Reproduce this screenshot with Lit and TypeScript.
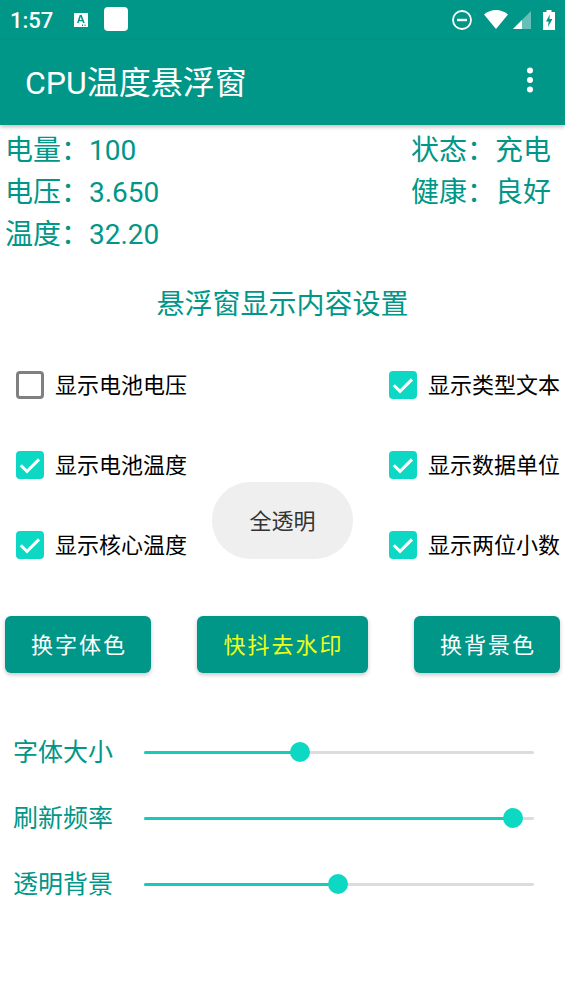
import { LitElement, html, css } from "lit";
import { customElement } from "lit/decorators.js";

const check = (label: string, on: boolean) => html`
  <div class="check">
    <span class="box ${on ? "on" : ""}">
      ${on ? html`<svg width="28" height="28" viewBox="0 0 28 28"><path d="M4.800 14.200l6.200 6.100L23 8.400" fill="none" stroke="#fff" stroke-width="3"/></svg>` : ""}
    </span>
    <span class="check-label">${label}</span>
  </div>`;

const slider = (label: string, pos: number) => html`
  <div class="slider-row">
    <span class="slider-label">${label}</span>
    <div class="track">
      <div class="fill" style="width:${pos}px"></div>
      <div class="thumb" style="left:${pos - 10}px"></div>
    </div>
  </div>`;

@customElement("app-root")
export class AppRoot extends LitElement {
  static styles = css`
    :host { display: block; width: 565px; height: 1004px; background: #fff; overflow: hidden;
      font-family: Roboto, "Noto Sans CJK SC", sans-serif; }
    .status { height: 40px; background: #009688; color: #fff; display: flex; align-items: center; padding: 0 10px 0 10px; box-sizing: border-box; font-size: 22px; font-weight: 500; }
    .status svg { display: block; }
    .time { width: 64px; }
    .white-square { width: 24px; height: 24px; border-radius: 4px; background: #fff; margin-left: 15px; margin-top: -2px; }
    .spacer { flex: 1; }
    .appbar { height: 85px; background: #009688; color: #fff; display: flex; align-items: center; justify-content: space-between; padding: 0 30px 6px 25px; box-sizing: border-box; font-size: 32px; box-shadow: 0 2px 4px rgba(0,0,0,.25); position: relative; }
    .info { display: flex; justify-content: space-between; color: #009688; font-size: 28px; line-height: 42px; padding: 5px 14px 0 5px; }
    .title { color: #009688; font-size: 28px; text-align: center; line-height: 40px; margin-top: 29px; }
    .grid { display: grid; grid-template-columns: 1fr auto 1fr; grid-template-rows: repeat(3, 80px); margin-top: 20px; padding: 0 5px 0 16px; }
    .check { display: flex; align-items: center; gap: 11px; font-size: 22px; color: #000; }
    .check-label { padding-bottom: 4px; }
    .right { justify-self: end; align-self: center; }
    .box { width: 28px; height: 28px; box-sizing: border-box; border: 3px solid #808080; border-radius: 4px; display: block; }
    .box.on { border: 0; background: #0dd8c4; }
    .box svg { display: block; }
    .pill { grid-column: 2; grid-row: 2 / span 2; align-self: end; margin: 0 28px 26px 17px; width: 141px; height: 77px; box-sizing: border-box; padding-bottom: 4px; border-radius: 38px; background: #efefef; display: flex; align-items: center; justify-content: center; font-size: 22px; color: #333; }
    .btns { display: flex; justify-content: space-between; padding: 0 5px; margin-top: 31px; }
    .btn { height: 57px; box-sizing: border-box; padding: 0 0 4px 2px; border-radius: 6px; background: #009688; color: #fff; font-size: 22px; letter-spacing: 2px; display: flex; align-items: center; justify-content: center; box-shadow: 0 2px 4px rgba(0,0,0,.22); }
    .b1 { width: 146px; }
    .b2 { width: 171px; color: #eeff1a; }
    .sliders { margin-top: 46px; padding: 0 31px 0 13px; }
    .slider-row { display: flex; align-items: center; height: 66px; }
    .slider-label { width: 131px; color: #009688; font-size: 25px; padding-bottom: 4px; }
    .track { position: relative; flex: 1; height: 3px; background: #dcdcdc; border-radius: 2px; }
    .fill { position: absolute; left: 0; top: 0; height: 3px; background: #14cdb9; border-radius: 2px; }
    .thumb { position: absolute; top: -8.500px; width: 20px; height: 20px; border-radius: 50%; background: #0dd8c4; }
  `;

  render() {
    return html`
      <div class="status">
        <span class="time">1:57</span>
        <svg width="15" height="20" viewBox="0 0 15 20"><path fill="#fff" d="M0 3h14v14H0z"/><path fill="#009688" d="M5.700 5h2l3 8H9l-.6-1.800H5.200L4.600 13H3zM6.700 6.800L5.700 10h2.100zM8 14.500h1V16H8zM10.500 14.500h1V16h-1z"/></svg>
        <div class="white-square"></div>
        <div class="spacer"></div>
        <svg width="20" height="20" viewBox="0 0 20 20" style="margin-right:12px"><circle cx="10" cy="10" r="9" fill="none" stroke="#fff" stroke-width="1.800"/><path fill="#fff" d="M5 8.800h10v2.400H5z"/></svg>
        <svg width="24" height="20" viewBox="0 0 24 20" style="margin-right:5px"><path fill="#fff" d="M0 4.500C3.300 1.600 7.500 0 12 0s8.700 1.600 12 4.500L12 19z"/></svg>
        <svg width="18" height="20" viewBox="0 0 18 20" style="margin-right:12px"><path fill="#fff" fill-opacity=".4" d="M18 1v18H0z"/><path fill="#fff" d="M0 19l9-9v9z"/></svg>
        <svg width="12" height="20" viewBox="0 0 12 20"><path fill="#fff" d="M3.500 0h5v2H12v18H0V2h3.500z"/><path fill="#009688" d="M6.800 4.500L3 11.500h2.600L5 17l4.400-8H6.400z"/></svg>
      </div>
      <div class="appbar">
        <span>CPU温度悬浮窗</span>
        <svg width="10" height="28" viewBox="0 0 10 28"><circle cx="5" cy="4.500" r="3" fill="#fff"/><circle cx="5" cy="14" r="3" fill="#fff"/><circle cx="5" cy="23.500" r="3" fill="#fff"/></svg>
      </div>
      <div class="info">
        <div><div>电量：100</div><div>电压：3.650</div><div>温度：32.20</div></div>
        <div><div>状态：充电</div><div>健康：良好</div></div>
      </div>
      <div class="title">悬浮窗显示内容设置</div>
      <div class="grid">
        ${check("显示电池电压", false)}
        <div></div>
        <div class="right">${check("显示类型文本", true)}</div>
        ${check("显示电池温度", true)}
        <div class="pill">全透明</div>
        <div class="right">${check("显示数据单位", true)}</div>
        ${check("显示核心温度", true)}
        <div class="right" style="grid-column:3">${check("显示两位小数", true)}</div>
      </div>
      <div class="btns">
        <div class="btn b1">换字体色</div>
        <div class="btn b2">快抖去水印</div>
        <div class="btn b1">换背景色</div>
      </div>
      <div class="sliders">
        ${slider("字体大小", 156)}
        ${slider("刷新频率", 369)}
        ${slider("透明背景", 194)}
      </div>
    `;
  }
}
